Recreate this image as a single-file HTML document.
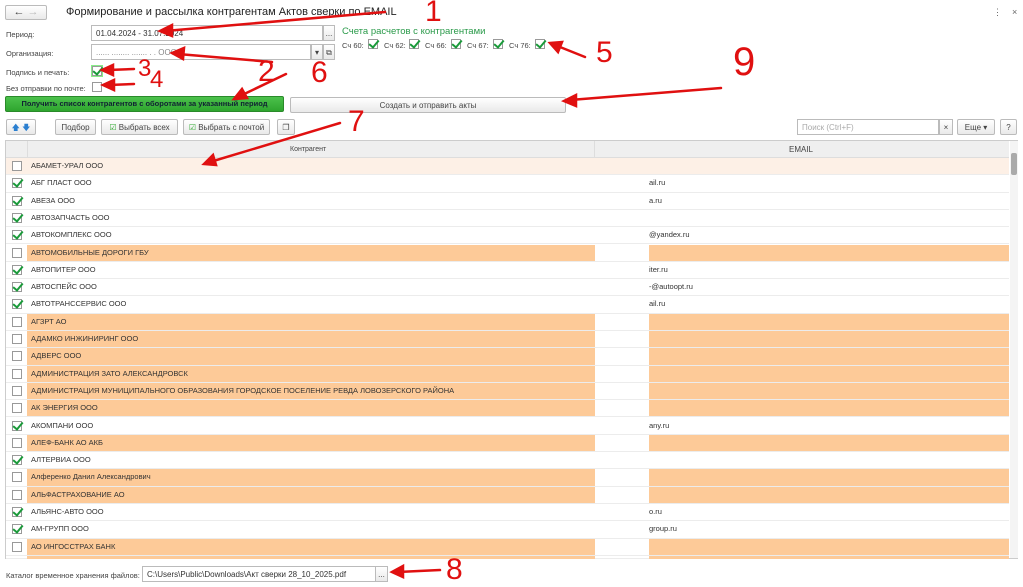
<!DOCTYPE html>
<html><head><meta charset="utf-8"><style>
*{box-sizing:border-box;margin:0;padding:0}
body{width:1023px;height:583px;overflow:hidden;background:#fff;font-family:"Liberation Sans",Arial,sans-serif;font-size:7.5px;color:#444;position:relative}
.a{position:absolute}
.inp{position:absolute;border:1px solid #bbb;background:#fff;font-size:8px;color:#333;padding:3px 4px;height:16px}
.btn{position:absolute;border:1px solid #bbb;border-radius:2px;background:linear-gradient(#fff,#e9e9e9);font-size:8px;color:#444;text-align:center;line-height:15px;height:16px}
.cb{position:absolute;width:10px;height:10px;border:1px solid #999;background:#fff}
.ck::after{content:"";position:absolute;left:2px;top:-2px;width:4px;height:8px;border:solid #1a9a3a;border-width:0 2px 2px 0;transform:rotate(40deg)}
.row{position:absolute;left:6px;width:1003px;height:17.3px;border-bottom:1px solid #ececec}
.row .c1{position:absolute;left:21px;top:0;width:568px;height:16.3px;padding-left:4px;line-height:16px;font-size:7.5px;color:#333}
.row .c2{position:absolute;left:643px;top:0;width:360px;height:16.3px;line-height:16px;font-size:7.5px;color:#333}
.or .c1,.or .c2{background:#fdca98}
.red{position:absolute;color:#e01010;font-size:30px;font-family:"Liberation Sans",sans-serif}
</style></head><body>
<div class="btn" style="left:5px;top:5px;width:42px;height:15px;line-height:13px;font-size:11px">&#8592; <span style="color:#bbb">&#8594;</span></div>
<div class="a" style="left:66px;top:6px;font-size:11px;color:#222">Формирование и рассылка контрагентам Актов сверки по EMAIL</div>
<div class="a" style="left:993px;top:7px;font-size:9px;color:#666">&#8942;</div>
<div class="a" style="left:1012px;top:7px;font-size:9px;color:#666">×</div>

<div class="a" style="left:6px;top:30px">Период:</div>
<div class="inp" style="left:91px;top:25px;width:232px">01.04.2024 - 31.07.2024</div>
<div class="btn" style="left:323px;top:25px;width:12px;border-radius:0">...</div>
<div class="a" style="left:6px;top:49px">Организация:</div>
<div class="inp" style="left:91px;top:44px;width:220px;color:#888">...... ........ ....... . . ООО</div>
<div class="btn" style="left:311px;top:44px;width:12px;border-radius:0">▾</div>
<div class="btn" style="left:323px;top:44px;width:12px;border-radius:0">⧉</div>
<div class="a" style="left:6px;top:68px">Подпись и печать:</div>
<div class="cb ck" style="left:92px;top:66px;box-shadow:0 0 0 1px #8e8"></div>
<div class="a" style="left:6px;top:84px">Без отправки по почте:</div>
<div class="cb" style="left:92px;top:82px"></div>

<div class="a" style="left:342px;top:26px;font-size:9.5px;color:#2a9a4a">Счета расчетов с контрагентами</div>
<div class="a" style="left:342px;top:41px">Сч 60:</div><div class="cb ck" style="left:368px;top:39px"></div>
<div class="a" style="left:384px;top:41px">Сч 62:</div><div class="cb ck" style="left:409px;top:39px"></div>
<div class="a" style="left:425px;top:41px">Сч 66:</div><div class="cb ck" style="left:451px;top:39px"></div>
<div class="a" style="left:467px;top:41px">Сч 67:</div><div class="cb ck" style="left:493px;top:39px"></div>
<div class="a" style="left:509px;top:41px">Сч 76:</div><div class="cb ck" style="left:535px;top:39px"></div>

<div class="a" style="left:5px;top:96px;width:279px;height:16px;background:linear-gradient(#4cc14c,#2ea52e);border:1px solid #2a8a2a;border-radius:2px;font-weight:bold;color:#123;text-align:center;line-height:14px;font-size:7.5px">Получить список контрагентов с оборотами за указанный период</div>
<div class="btn" style="left:290px;top:97px;width:276px">Создать и отправить акты</div>

<div class="btn" style="left:6px;top:119px;width:30px;color:#2a7fd0">🡅 🡇</div>
<div class="btn" style="left:55px;top:119px;width:41px">Подбор</div>
<div class="btn" style="left:101px;top:119px;width:77px"><span style="color:#3a3">☑</span> Выбрать всех</div>
<div class="btn" style="left:183px;top:119px;width:87px"><span style="color:#3a3">☑</span> Выбрать с почтой</div>
<div class="btn" style="left:277px;top:119px;width:18px">❐</div>
<div class="inp" style="left:797px;top:119px;width:142px;color:#aaa">Поиск (Ctrl+F)</div>
<div class="btn" style="left:939px;top:119px;width:14px;border-radius:0">×</div>
<div class="btn" style="left:957px;top:119px;width:38px">Еще ▾</div>
<div class="btn" style="left:1000px;top:119px;width:17px">?</div>

<div class="a" style="left:5px;top:140px;width:1013px;height:419px;border:1px solid #ccc"></div>
<div class="a" style="left:6px;top:141px;width:1003px;height:17px;background:#efefef;border-bottom:1px solid #ddd"></div>
<div class="a" style="left:27px;top:141px;width:1px;height:17px;background:#ddd"></div>
<div class="a" style="left:594px;top:141px;width:1px;height:17px;background:#ddd"></div>
<div class="a" style="left:290px;top:146px;font-size:7px">Контрагент</div>
<div class="a" style="left:789px;top:145px;font-size:8px">EMAIL</div>
<div class="a" style="left:1010px;top:141px;width:8px;height:417px;background:#f4f4f4"></div>
<div class="a" style="left:1011px;top:153px;width:6px;height:22px;background:#aaa;border-radius:2px"></div>
<div id="rows"></div>

<div class="a" style="left:6px;top:571px">Каталог временное хранения файлов:</div>
<div class="inp" style="left:142px;top:566px;width:234px">C:\Users\Public\Downloads\Акт сверки 28_10_2025.pdf</div>
<div class="btn" style="left:375px;top:566px;width:13px;border-radius:0">...</div>

<svg class="a" style="left:0;top:0" width="1023" height="583">
<g stroke="#e01010" stroke-width="2.5" fill="#e01010" stroke-linecap="round">
<line x1="385" y1="12" x2="165" y2="31"/><polygon points="160,31 172,25 172,36"/>
<line x1="272" y1="62" x2="178" y2="54"/><polygon points="172,53 184,48 183,59"/>
<line x1="134" y1="69" x2="108" y2="70"/><polygon points="102,70 113,65 113,75"/>
<line x1="134" y1="84" x2="109" y2="85"/><polygon points="103,85 114,80 114,90"/>
<line x1="286" y1="74" x2="240" y2="96"/><polygon points="234,99 242,89 247,98"/>
<line x1="585" y1="57" x2="555" y2="45"/><polygon points="550,43 562,42 558,52"/>
<line x1="721" y1="88" x2="570" y2="100"/><polygon points="564,101 576,95 576,106"/>
<line x1="340" y1="123" x2="210" y2="162"/><polygon points="204,164 213,155 216,165"/>
<line x1="440" y1="570" x2="398" y2="572"/><polygon points="392,572 403,566 403,577"/>
</g></svg>
<div class="red" style="left:425px;top:-5px">1</div>
<div class="red" style="left:258px;top:55px">2</div>
<div class="red" style="left:138px;top:55px;font-size:24px">3</div>
<div class="red" style="left:150px;top:66px;font-size:24px">4</div>
<div class="red" style="left:596px;top:36px">5</div>
<div class="red" style="left:311px;top:56px">6</div>
<div class="red" style="left:348px;top:105px">7</div>
<div class="red" style="left:446px;top:553px">8</div>
<div class="red" style="left:733px;top:40px;font-size:40px">9</div>

<script>
var R=[["АБАМЕТ-УРАЛ ООО",0,"",2],["АБГ ПЛАСТ ООО",1,"ail.ru"],["АВЕЗА ООО",1,"a.ru"],["АВТОЗАПЧАСТЬ ООО",1,""],["АВТОКОМПЛЕКС ООО",1,"@yandex.ru"],["АВТОМОБИЛЬНЫЕ ДОРОГИ ГБУ",0,"",1],["АВТОПИТЕР ООО",1,"iter.ru"],["АВТОСПЕЙС ООО",1,"-@autoopt.ru"],["АВТОТРАНССЕРВИС ООО",1,"ail.ru"],["АГЗРТ АО",0,"",1],["АДАМКО ИНЖИНИРИНГ ООО",0,"",1],["АДВЕРС ООО",0,"",1],["АДМИНИСТРАЦИЯ ЗАТО АЛЕКСАНДРОВСК",0,"",1],["АДМИНИСТРАЦИЯ МУНИЦИПАЛЬНОГО ОБРАЗОВАНИЯ ГОРОДСКОЕ ПОСЕЛЕНИЕ РЕВДА ЛОВОЗЕРСКОГО РАЙОНА",0,"",1],["АК ЭНЕРГИЯ ООО",0,"",1],["АКОМПАНИ ООО",1,"any.ru"],["АЛЕФ-БАНК АО АКБ",0,"",1],["АЛТЕРВИА ООО",1,""],["Алференко Данил Александрович",0,"",1],["АЛЬФАСТРАХОВАНИЕ АО",0,"",1],["АЛЬЯНС-АВТО ООО",1,"o.ru"],["АМ-ГРУПП ООО",1,"group.ru"],["АО ИНГОССТРАХ БАНК",0,"",1]];
var h="";R.forEach(function(r,i){var t=158+i*17.3;var st=r[3]==2?"background:#fdf0e6;":"";
h+='<div class="row'+(r[3]==1?' or':'')+'" style="top:'+t+'px;'+st+'"><div class="cb'+(r[1]?' ck':'')+'" style="left:6px;top:3px"></div><div class="c1">'+r[0]+'</div><div class="c2">'+r[2]+'</div></div>';});
h+='<div class="row or" style="top:556px;height:3px"><div class="c1" style="height:3px"></div><div class="c2" style="height:3px"></div></div>';
document.getElementById("rows").innerHTML=h;
</script>
</body></html>
